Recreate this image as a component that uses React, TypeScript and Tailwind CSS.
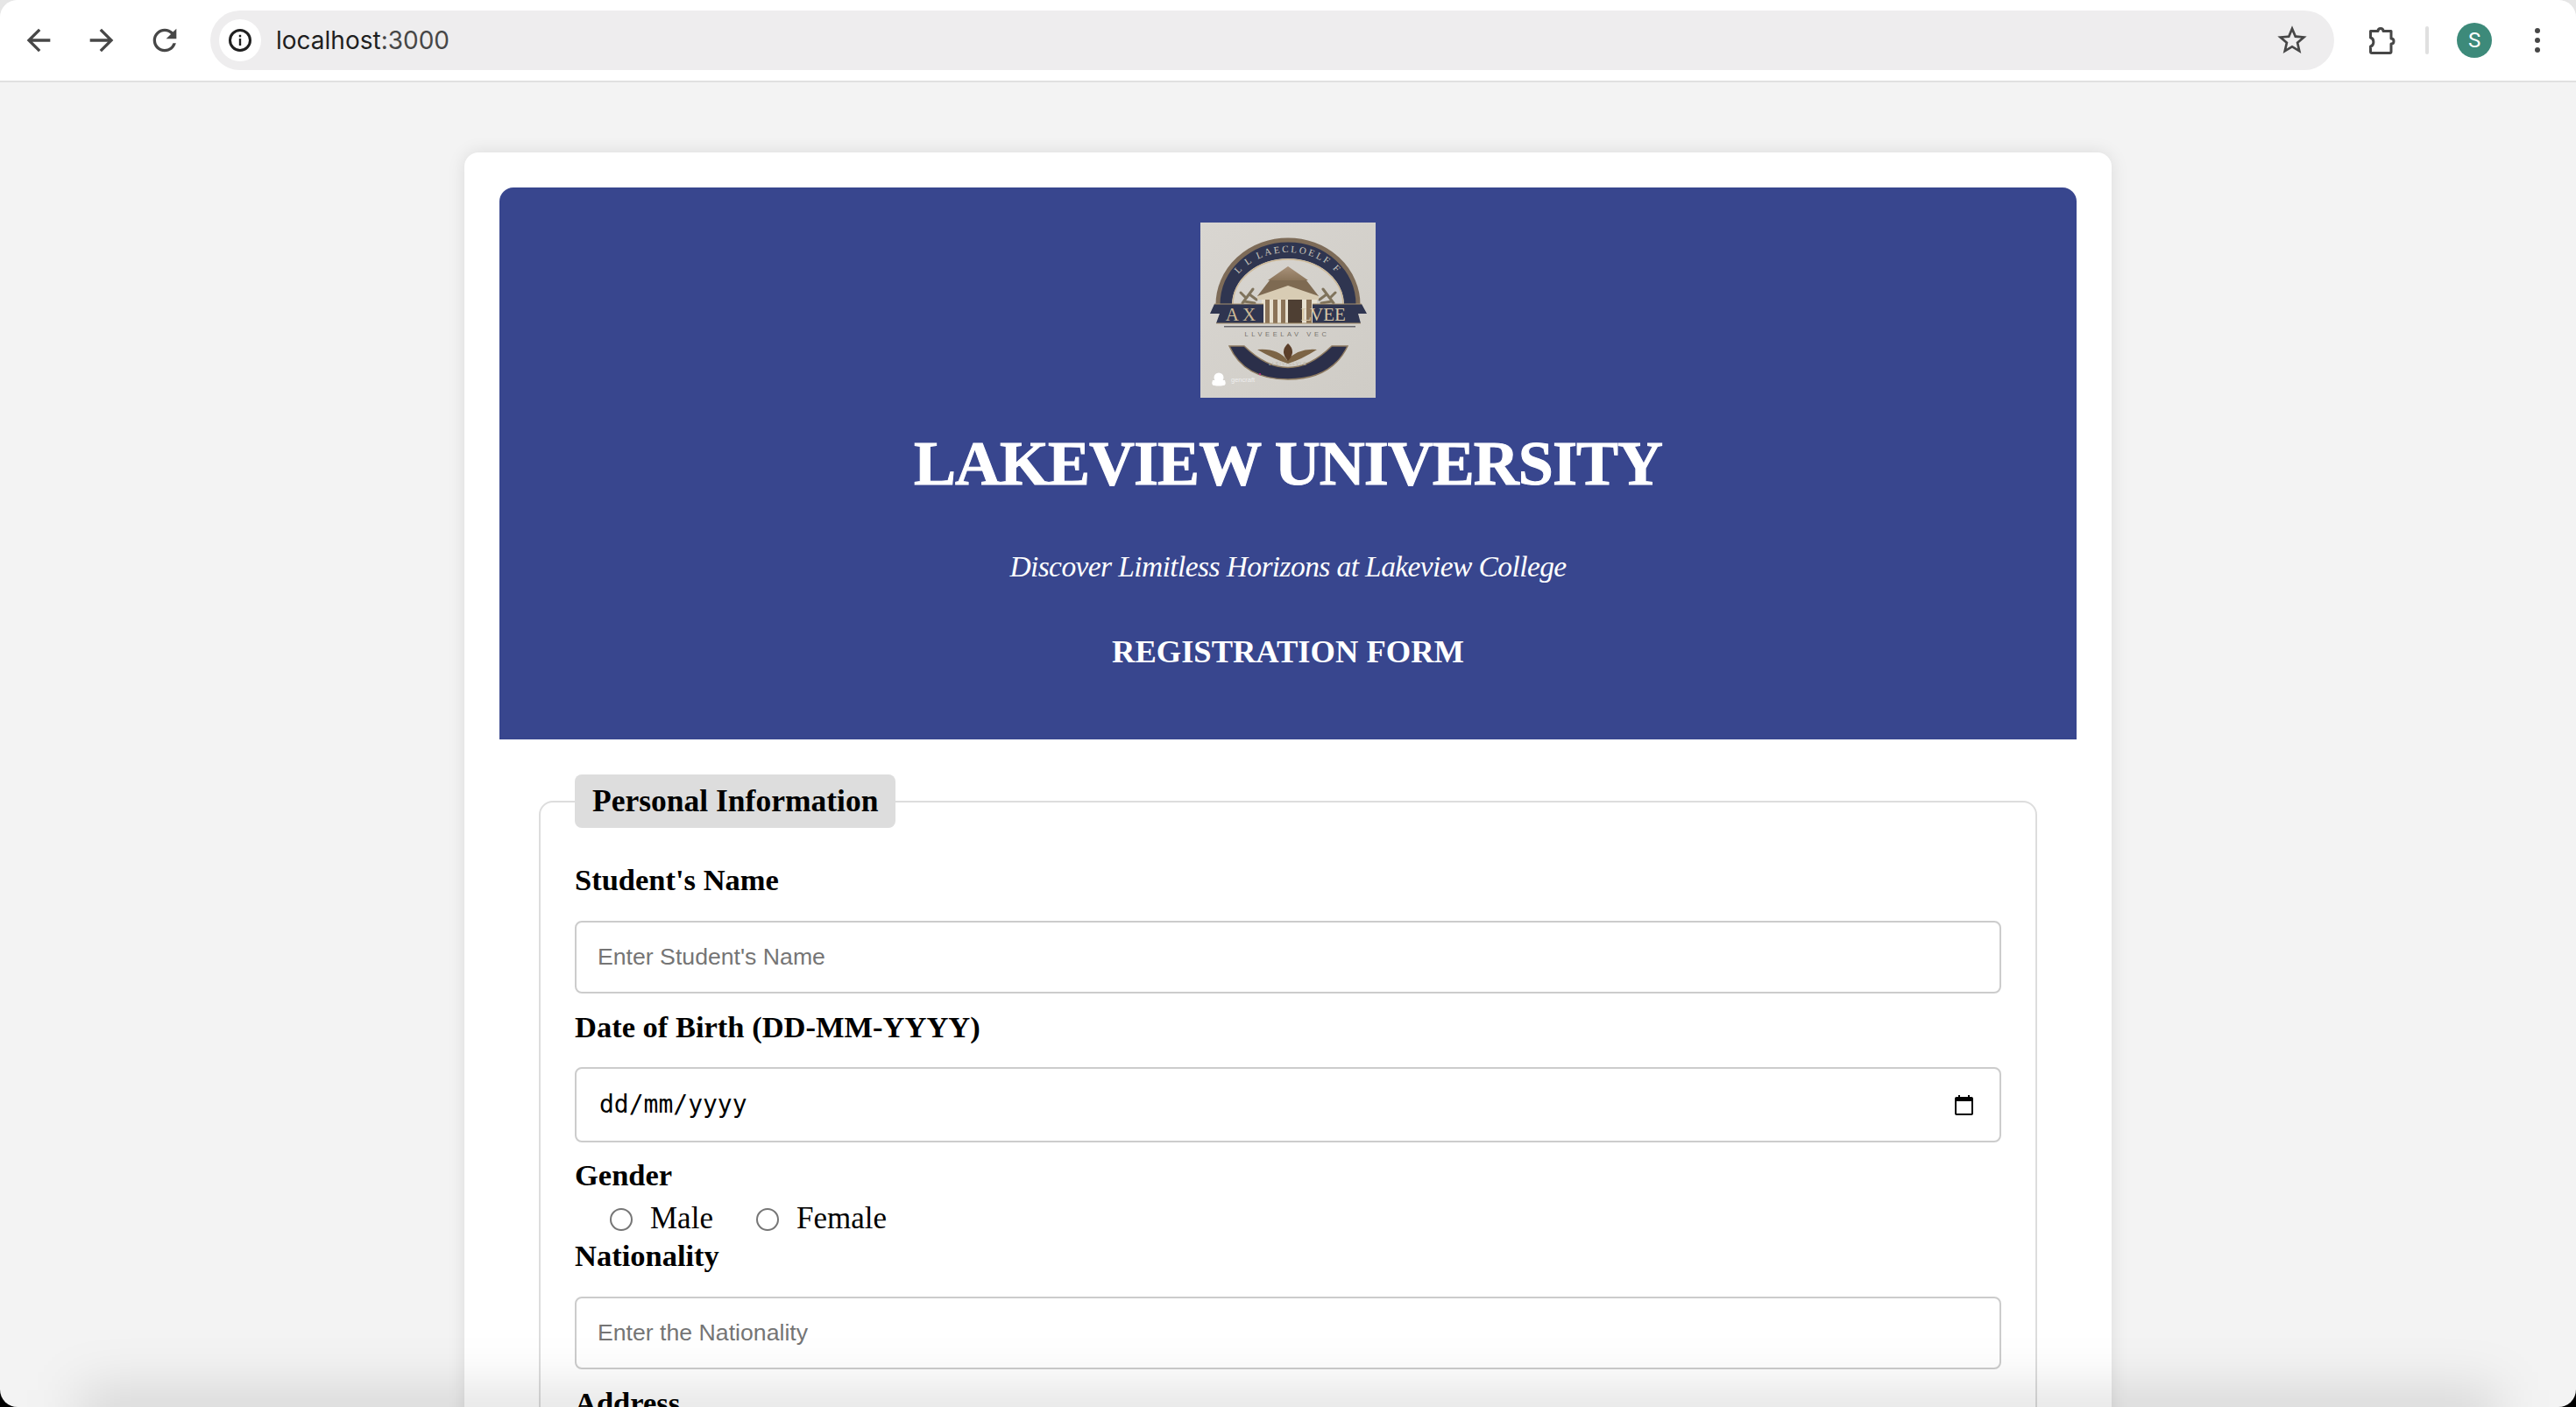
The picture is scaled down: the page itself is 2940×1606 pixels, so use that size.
function Logo() {
  return (
    <svg viewBox="0 0 200 200" className="block h-[200px] w-[200px]">
      <defs>
        <linearGradient id="paper" x1="0" y1="0" x2="1" y2="1">
          <stop offset="0" stopColor="#d9d6d1" />
          <stop offset="1" stopColor="#cfccc6" />
        </linearGradient>
        <linearGradient id="roof" x1="0" y1="0" x2="0" y2="1">
          <stop offset="0" stopColor="#a9927a" />
          <stop offset="1" stopColor="#8a745a" />
        </linearGradient>
        <path id="archText" d="M31 92 A69 58 0 0 1 169 92" />
      </defs>
      <rect width="200" height="200" fill="url(#paper)" />
      {/* top arch */}
      <path d="M19 94 A81 75 0 0 1 181 94 H164 A64 53 0 0 0 36 94 Z" fill="#2f3550" />
      <path d="M20 94 A80 74 0 0 1 180 94" fill="none" stroke="#7d6b58" strokeWidth="5" />
      <path d="M37 94 A63 52 0 0 1 163 94" fill="none" stroke="#cdb998" strokeWidth="1.5" />
      <text fontSize="11" fill="#c9c5bc" fontFamily="Liberation Serif" letterSpacing="2.5" textAnchor="middle">
        <textPath href="#archText" startOffset="50%">L L LAECLOELF F</textPath>
      </text>
      {/* laurels */}
      <g stroke="#7f735c" strokeWidth="3" strokeLinecap="round" fill="none">
        <path d="M48 92 L60 76 M52 86 L46 80 M56 82 L64 88 M50 90 L62 92" />
        <path d="M152 92 L140 76 M148 86 L154 80 M144 82 L136 88 M150 90 L138 92" />
      </g>
      {/* building */}
      <path d="M100 50 L123 66 H77 Z" fill="url(#roof)" />
      <path d="M65 84 L79 66 H121 L135 84 Z" fill="#7e6a52" />
      <path d="M65 84 L100 72 L135 84 V88 H65 Z" fill="#d8ccb4" />
      <rect x="70" y="88" width="63" height="27" fill="#e7e0d0" />
      <g fill="#8b7358">
        <rect x="74" y="88" width="5" height="27" />
        <rect x="83" y="88" width="5" height="27" />
        <rect x="92" y="88" width="5" height="27" />
        <rect x="100" y="88" width="16" height="27" fill="#4e3f33" />
        <rect x="121" y="88" width="6" height="27" />
      </g>
      {/* ribbon */}
      <path d="M16 93 H72 V115 H18 L22 104 L11 104 Z" fill="#2f3550" />
      <path d="M128 93 H184 L190 104 L180 104 L183 115 H128 Z" fill="#2f3550" />
      <path d="M16 93 H72 M128 93 H184 M18 115 H183" stroke="#a8926f" strokeWidth="1.2" fill="none" />
      <text x="46" y="112" textAnchor="middle" fontSize="21" fill="#cdb995" fontFamily="Liberation Serif">A X</text>
      <text x="140" y="112" textAnchor="middle" fontSize="21" fill="#d8c8a8" fontFamily="Liberation Serif">LVEE</text>
      <rect x="27" y="118" width="150" height="1.5" fill="#66666c" />
      <text x="99" y="130" textAnchor="middle" fontSize="7.5" fill="#77736c" fontFamily="Liberation Sans" letterSpacing="3.6">LLVEELAV VEC</text>
      {/* bottom arc */}
      <path d="M33 141 H50 Q100 190 150 141 H168 Q150 179 100 179 Q50 179 33 141 Z" fill="#2b2f4a" stroke="#8d7a60" strokeWidth="1.5" />
      <text x="100" y="163" textAnchor="middle" fontSize="5" fill="#b8b3a8" fontFamily="Liberation Sans" letterSpacing="1.2">LLEIVIGLVLE</text>
      {/* book */}
      <path d="M65 145 Q88 143 99 157 Q112 143 133 145 Q116 156 100 161 Q84 156 65 145 Z" fill="#7c6445" />
      <path d="M100 138 Q110 147 100 158 Q90 147 100 138 Z" fill="#5b3f2a" />
      {/* watermark */}
      <circle cx="21" cy="177" r="5.5" fill="#ffffff" />
      <path d="M14 180 Q12 186 16 186 Q21 187 26 186 Q30 186 28 180 Z" fill="#ffffff" />
      <text x="35" y="182" fontSize="7.5" fill="#efefef" fontFamily="Liberation Sans">gencraft</text>
      <circle cx="68" cy="173" r="1" fill="#d6278f" />
    </svg>
  );
}

function ToolIcon({ d, className }: { d: string; className: string }) {
  return (
    <svg viewBox="0 0 24 24" className={className} fill="#474747">
      <path d={d} />
    </svg>
  );
}

function Label({ children }: { children: React.ReactNode }) {
  return <label className="block text-[34.5px] leading-[40px] font-bold text-black">{children}</label>;
}

function TextInput({ placeholder }: { placeholder: string }) {
  return (
    <input
      placeholder={placeholder}
      className="block h-[83px] w-full rounded-[8px] border-2 border-[#cccccc] bg-white px-[24px] font-['Liberation_Sans'] text-[26.67px] placeholder:text-[#757575]"
    />
  );
}

export default function App() {
  return (
    <div className="h-[1606px] overflow-hidden bg-gradient-to-b from-[#e6e6e6] from-50% to-black to-50%">
      <div className="relative h-[1606px] overflow-hidden rounded-[20px] bg-[#f3f3f3] font-['Liberation_Serif',serif]">
        <div className="flex h-[94px] items-center border-b-2 border-[#e0e0e0] bg-white font-['Inter',sans-serif]">
          <div className="flex w-[240px] items-center gap-[32px] pl-[24px]">
            <ToolIcon className="h-[40px] w-[40px]" d="M20 11H7.83l5.59-5.59L12 4l-8 8 8 8 1.41-1.41L7.83 13H20v-2z" />
            <ToolIcon className="h-[40px] w-[40px]" d="M4 11h12.17l-5.59-5.59L12 4l8 8-8 8-1.41-1.41L16.17 13H4v-2z" />
            <ToolIcon
              className="h-[40px] w-[40px]"
              d="M17.65 6.35A7.958 7.958 0 0 0 12 4c-4.42 0-7.99 3.58-7.99 8s3.57 8 7.99 8c3.73 0 6.84-2.55 7.73-6h-2.08A5.99 5.99 0 0 1 12 18c-3.31 0-6-2.69-6-6s2.69-6 6-6c1.66 0 3.14.69 4.22 1.78L13 11h7V4l-2.35 2.35z"
            />
          </div>
          <div className="flex h-[68px] w-[2424px] items-center rounded-full bg-[#eeedee] pl-[10px] pr-[28px]">
            <div className="flex h-[48px] w-[48px] items-center justify-center rounded-full bg-white">
              <svg viewBox="0 0 26 26" className="h-[26px] w-[26px]" fill="none">
                <circle cx="13" cy="13" r="11.5" stroke="#1f1f1f" strokeWidth="3" />
                <rect x="11.8" y="11" width="2.4" height="8" fill="#1f1f1f" />
                <rect x="11.8" y="6.8" width="2.4" height="2.6" fill="#1f1f1f" />
              </svg>
            </div>
            <span className="ml-[17px] text-[28px] text-[#1f1f1f]">
              localhost<span className="text-[#474747]">:3000</span>
            </span>
            <ToolIcon
              className="ml-auto h-[40px] w-[40px]"
              d="M22 9.24l-7.19-.62L12 2 9.19 8.63 2 9.24l5.46 4.73L5.82 21 12 17.27 18.18 21l-1.63-7.03L22 9.24zM12 15.4l-3.76 2.27 1-4.28-3.32-2.88 4.38-.38L12 6.1l1.71 4.04 4.38.38-3.32 2.88 1 4.28L12 15.4z"
            />
          </div>
          <svg viewBox="0 0 32 32" className="ml-[38px] h-[32px] w-[32px]" fill="none" stroke="#474747" strokeWidth="3" strokeLinejoin="round">
            <path d="M3.5 5.5 H12 C12 1.5 18 1.5 18 5.5 H27 V14 C31 14 31 20 27 20 V29 Q27 30.5 25.5 30.5 H5 Q3.5 30.5 3.5 29 V23 C8 22 8 14 3.5 13 Z" />
          </svg>
          <div className="ml-[34px] h-[32px] w-[4px] rounded-full bg-[#e0e0e0]" />
          <div className="ml-[32px] flex h-[40px] w-[40px] items-center justify-center rounded-full bg-[#3d8a7a] font-['Roboto'] text-[24px] text-white">
            S
          </div>
          <div className="ml-[49px] flex flex-col gap-[5px]">
            <span className="h-[6px] w-[6px] rounded-full bg-[#474747]" />
            <span className="h-[6px] w-[6px] rounded-full bg-[#474747]" />
            <span className="h-[6px] w-[6px] rounded-full bg-[#474747]" />
          </div>
        </div>

        <div className="mx-auto mt-[80px] w-[1880px] rounded-[16px] bg-white p-[40px] shadow-[0_0_20px_rgba(0,0,0,0.1)]">
          <header className="flex h-[630px] flex-col items-center rounded-t-[16px] bg-[#38468e] pt-[40px] text-white">
            <Logo />
            <h1 className="mt-[33px] text-[72px] leading-[84px] font-bold tracking-[-1px] [-webkit-text-stroke:1px_white]">
              LAKEVIEW UNIVERSITY
            </h1>
            <p className="mt-[48px] text-[33.5px] leading-[56px] tracking-[-0.6px] italic">
              Discover Limitless Horizons at Lakeview College
            </p>
            <h2 className="mt-[46px] text-[36.5px] leading-[46px] font-bold">REGISTRATION FORM</h2>
          </header>

          <fieldset className="mx-[45px] mt-[40px] rounded-[16px] border-2 border-[#dddddd] px-[39px] pb-[40px]">
            <legend className="rounded-[8px] bg-[#dddddd] px-[20px] py-[10px] text-[35.5px] leading-[41px] font-bold">
              Personal Information
            </legend>
            <div className="mt-[39px]">
              <Label>Student's Name</Label>
              <div className="mt-[27px]">
                <TextInput placeholder="Enter Student's Name" />
              </div>
            </div>
            <div className="mt-[18px]">
              <Label>Date of Birth (DD-MM-YYYY)</Label>
              <div className="mt-[26px] flex h-[86px] items-center justify-between rounded-[8px] border-2 border-[#cccccc] pr-[30px] pl-[26px] font-['DejaVu_Sans_Mono'] text-[28px]">
                <span>dd/mm/yyyy</span>
                <svg viewBox="0 0 21 23" className="h-[23px] w-[21px]">
                  <path
                    d="M0 4 Q0 2 2 2 H4 V0 H6 V2 H15 V0 H17 V2 H19 Q21 2 21 4 V21 Q21 23 19 23 H2 Q0 23 0 21 Z M2 7 V21 H19 V7 Z"
                    fill="#000"
                    fillRule="evenodd"
                  />
                </svg>
              </div>
            </div>
            <div className="mt-[17px]">
              <Label>Gender</Label>
              <div className="mt-[9px] flex h-[43px] items-center pl-[40px] text-[35px]">
                <input type="radio" name="gender" className="h-[26px] w-[26px] appearance-none rounded-full border-2 border-[#767676] bg-white" />
                <span className="ml-[20px]">Male</span>
                <input type="radio" name="gender" className="ml-[49px] h-[26px] w-[26px] appearance-none rounded-full border-2 border-[#767676] bg-white" />
                <span className="ml-[20px]">Female</span>
              </div>
            </div>
            <div>
              <Label>Nationality</Label>
              <div className="mt-[27px]">
                <TextInput placeholder="Enter the Nationality" />
              </div>
            </div>
            <div className="mt-[18px]">
              <Label>Address</Label>
              <textarea
                placeholder="Enter the Address"
                className="mt-[26px] block h-[160px] w-full rounded-[8px] border-2 border-[#cccccc] p-[24px] font-['Liberation_Sans'] text-[26.67px]"
              />
            </div>
          </fieldset>
        </div>

        {/* window shadow along the bottom edge */}
        <div className="pointer-events-none absolute inset-x-[90px] bottom-[-40px] h-[60px] bg-black/12 blur-[30px]" />
      </div>
    </div>
  );
}
